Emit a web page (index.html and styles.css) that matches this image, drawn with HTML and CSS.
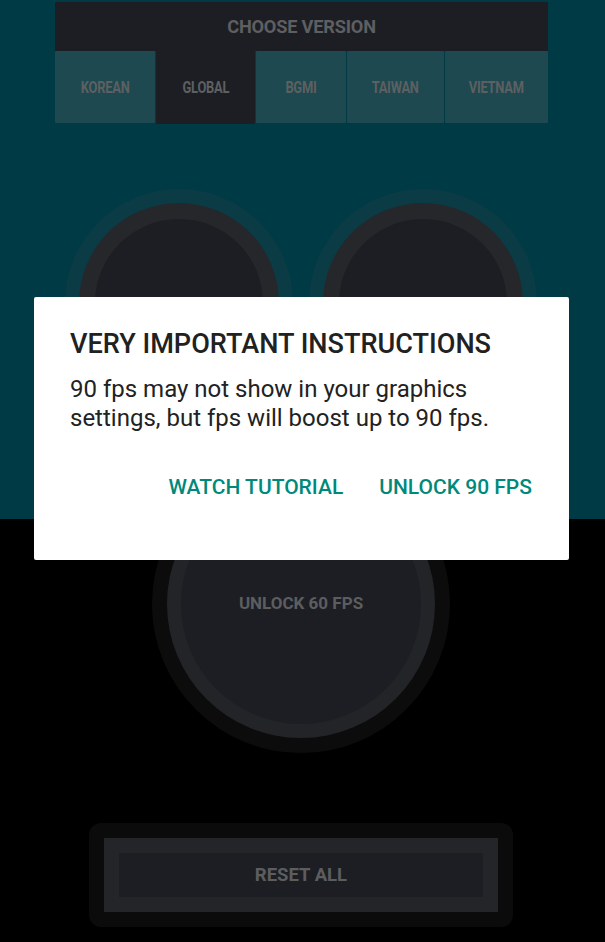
FILE: index.html
```html
<!DOCTYPE html>
<html>
<head>
<meta charset="utf-8">
<link rel="stylesheet" href="styles.css">
</head>
<body>
<div class="screen">
  <section class="top">
    <div class="version-panel">
      <div class="version-title">CHOOSE VERSION</div>
      <div class="tabs">
        <div class="tab"><span class="tab-text">KOREAN</span></div>
        <div class="tab selected"><span class="tab-text">GLOBAL</span></div>
        <div class="tab"><span class="tab-text">BGMI</span></div>
        <div class="tab"><span class="tab-text">TAIWAN</span></div>
        <div class="tab"><span class="tab-text">VIETNAM</span></div>
      </div>
    </div>
    <div class="circle-row">
      <div class="knob small"><div class="knob-mid"><div class="knob-core"></div></div></div>
      <div class="knob small"><div class="knob-mid"><div class="knob-core"></div></div></div>
    </div>
  </section>
  <section class="bottom">
    <div class="knob big"><div class="knob-mid"><div class="knob-core"><span class="knob-label">UNLOCK 60 FPS</span></div></div></div>
    <div class="reset-outer"><div class="reset-mid"><div class="reset-core">RESET ALL</div></div></div>
  </section>

  <div class="dialog">
    <h1 class="dialog-title">VERY IMPORTANT INSTRUCTIONS</h1>
    <p class="dialog-body">90 fps may not show in your graphics settings, but fps will boost up to 90 fps.</p>
    <div class="dialog-actions">
      <span class="dialog-btn">WATCH TUTORIAL</span>
      <span class="dialog-btn">UNLOCK 90 FPS</span>
    </div>
  </div>
</div>
</body>
</html>
```

FILE: styles.css
```css
html, body {
  margin: 0;
  padding: 0;
  background: #000;
}
body {
  width: 605px;
  height: 942px;
  overflow: hidden;
  font-family: Roboto, "Noto Sans", sans-serif;
}
.screen {
  position: relative;
  width: 605px;
  height: 942px;
}
.top {
  height: 519px;
  background: #003a45;
  padding-top: 2px;
  box-sizing: border-box;
}
.version-panel {
  width: 493px;
  margin: 0 0 0 55px;
  background: #1c1e24;
}
.version-title {
  height: 49px;
  display: flex;
  align-items: center;
  justify-content: center;
  color: #5e5f61;
  font-weight: bold;
  font-size: 18.2px;
  letter-spacing: -0.2px;
}
.tabs {
  display: grid;
  grid-template-columns: 100px 99px 90px 97px 103px;
  column-gap: 1px;
  background: #003a45;
  height: 72px;
}
.tab {
  background: #1e4950;
  display: flex;
  align-items: center;
  justify-content: center;
  color: #5d6061;
  font-weight: bold;
  font-size: 16.5px;
  border-radius: 1px;
}
.tab-text {
  display: inline-block;
  transform: scaleX(0.78);
  letter-spacing: -0.3px;
  white-space: nowrap;
}
.tab.selected {
  background: #1c1e24;
  margin-bottom: -1px;
}
.circle-row {
  display: flex;
  justify-content: center;
  gap: 16px;
  margin-top: 66px;
  padding-right: 4px;
}
.knob {
  border-radius: 50%;
  display: flex;
  align-items: center;
  justify-content: center;
  box-sizing: border-box;
}
.knob-mid {
  border-radius: 50%;
  width: 100%;
  height: 100%;
  box-sizing: border-box;
  display: flex;
}
.knob-core {
  border-radius: 50%;
  flex: 1;
  display: flex;
  align-items: center;
  justify-content: center;
}
.knob.small {
  width: 228px;
  height: 228px;
  background: #0b3c46;
  padding: 14px;
}
.knob.small .knob-mid {
  background: #26272b;
  padding: 16px;
}
.knob.small .knob-core {
  background: #1c1e23;
}
.bottom {
  display: flex;
  flex-direction: column;
  align-items: center;
  padding-right: 3px;
}
.knob.big {
  width: 298px;
  height: 298px;
  background: #0c0c0c;
  padding: 15px;
  margin-top: -64px;
}
.knob.big .knob-mid {
  background: #232428;
  padding: 14px;
}
.knob.big .knob-core {
  background: #1c1e24;
}
.knob-label {
  color: #5c5d5f;
  font-weight: bold;
  font-size: 17px;
  margin-top: -2px;
}
.reset-outer {
  margin-top: 70px;
  width: 424px;
  height: 104px;
  box-sizing: border-box;
  background: #0b0b0b;
  border-radius: 12px;
  padding: 15px;
}
.reset-mid {
  height: 100%;
  box-sizing: border-box;
  background: #242529;
  padding: 15px;
}
.reset-core {
  height: 100%;
  background: #1c1e24;
  display: flex;
  align-items: center;
  justify-content: center;
  color: #5c5d5f;
  font-weight: bold;
  font-size: 18.5px;
}
.dialog {
  position: absolute;
  left: 34px;
  top: 297px;
  width: 535px;
  height: 263px;
  box-sizing: border-box;
  background: #fff;
  border-radius: 2px;
  padding: 31px 36px 0 36px;
}
.dialog-title {
  margin: 0;
  font-size: 27.1px;
  font-weight: 500;
  line-height: 32px;
  color: #212121;
}
.dialog-body {
  margin: 15px 0 0 0;
  font-size: 24px;
  line-height: 28.5px;
  color: #222;
}
.dialog-actions {
  display: flex;
  justify-content: flex-end;
  gap: 36px;
  margin-top: 43px;
  margin-right: 1px;
}
.dialog-btn {
  font-size: 21px;
  font-weight: 500;
  color: #00897b;
}
```
